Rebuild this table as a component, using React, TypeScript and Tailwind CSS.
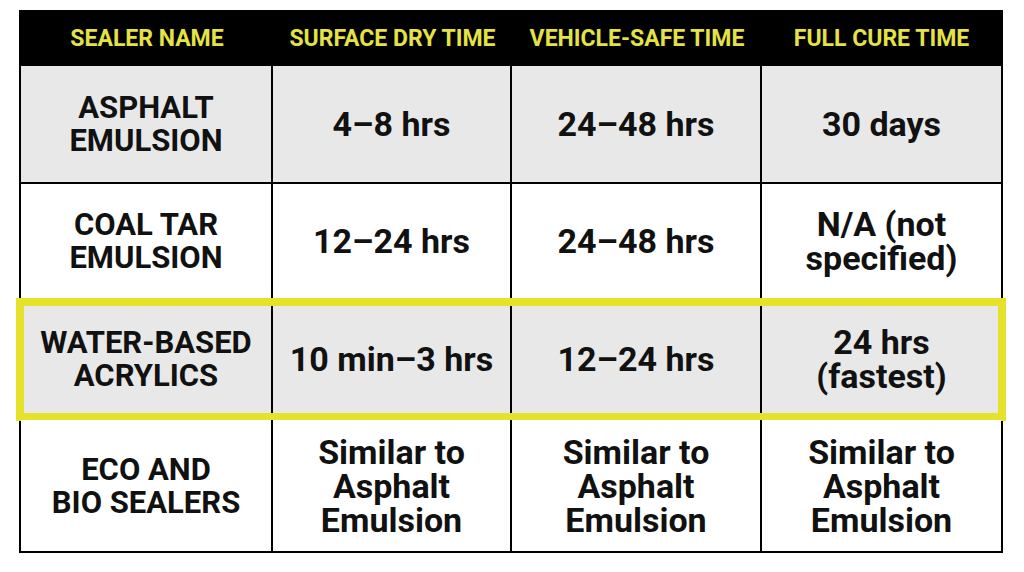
import React from 'react';

const headers = ['SEALER NAME', 'SURFACE DRY TIME', 'VEHICLE-SAFE TIME', 'FULL CURE TIME'];

const rows = [
  { cells: [['ASPHALT', 'EMULSION'], ['4–8 hrs'], ['24–48 hrs'], ['30 days']], shaded: true, h: 'h-[118px]' },
  { cells: [['COAL TAR', 'EMULSION'], ['12–24 hrs'], ['24–48 hrs'], ['N/A (not', 'specified)']], shaded: false, h: 'h-[116px]' },
  { cells: [['WATER-BASED', 'ACRYLICS'], ['10 min–3 hrs'], ['12–24 hrs'], ['24 hrs', '(fastest)']], shaded: true, h: 'h-[120px]', highlight: true },
  {
    cells: [['ECO AND', 'BIO SEALERS'], ['Similar to', 'Asphalt', 'Emulsion'], ['Similar to', 'Asphalt', 'Emulsion'], ['Similar to', 'Asphalt', 'Emulsion']],
    shaded: false,
    h: 'h-[131px]',
  },
];

const cols = 'grid grid-cols-[252px_239px_250px_239px]';

const App = () => {
  return (
    <div className="w-[1024px] h-[572px] bg-white pt-[10px] pl-[19px] font-['Roboto',sans-serif]">
      <div className="w-[984px] border-2 border-black">
        {/* Header */}
        <div className={`${cols} h-[54px] bg-black`}>
          {headers.map((h) => (
            <div key={h} className="flex items-center justify-center text-[23px] font-bold text-[#e4e244]">
              {h}
            </div>
          ))}
        </div>

        {rows.map((r, i) => (
          <div
            key={i}
            className={`relative ${cols} ${r.h} ${r.shaded ? 'bg-[#e8e8e8]' : 'bg-white'} ${i < rows.length - 1 ? 'border-b-2 border-black' : ''}`}
          >
            {r.cells.map((lines, j) => (
              <div
                key={j}
                className={`flex flex-col items-center justify-center text-center font-bold text-[#111] ${
                  j === 0 ? 'text-[31px] leading-[33px]' : 'text-[34px] leading-[34px]'
                } ${j < 3 ? 'border-r-2 border-black' : ''}`}
              >
                {lines.map((l) => (
                  <span key={l}>{l}</span>
                ))}
              </div>
            ))}
            {r.highlight && (
              <div className="pointer-events-none absolute -top-[2px] -bottom-[3px] -left-[5px] -right-[5px] border-[8px] border-[#e6e22c]" />
            )}
          </div>
        ))}
      </div>
    </div>
  );
};

export default App;
